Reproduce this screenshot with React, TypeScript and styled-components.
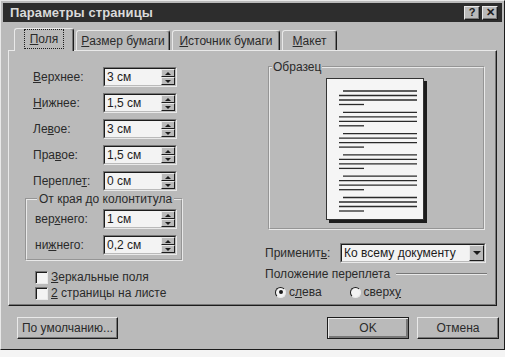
import React from 'react';
import styled, { createGlobalStyle } from 'styled-components';

const face = '#bababa';
const light = '#e9e9e9';
const shadow = '#777777';
const dark = '#1c1c1c';
const ink = '#2a2a2a';

const GlobalStyle = createGlobalStyle`
  html, body {
    margin: 0;
    padding: 0;
    background: #f4f4f4;
  }
  body {
    font-family: 'Liberation Sans', Arial, sans-serif;
    font-size: 12px;
    color: ${ink};
  }
  * {
    box-sizing: border-box;
  }
`;

const Window = styled.div`
  width: 505px;
  height: 350px;
  background: ${face};
  border: 1px solid;
  border-color: ${light} ${dark} ${dark} ${light};
  padding: 2px;
  display: flex;
  flex-direction: column;
`;

const TitleBar = styled.div`
  height: 19px;
  background: #2d2d2d;
  display: flex;
  align-items: center;
  justify-content: space-between;
  padding: 0 4px 0 7px;
`;

const Title = styled.span`
  color: #dadada;
  font-weight: bold;
  font-size: 13px;
  letter-spacing: 0.1px;
`;

const CaptionButtons = styled.div`
  display: flex;
  gap: 2px;
`;

const CaptionBtn = styled.div`
  width: 16px;
  height: 14px;
  background: ${face};
  border: 1px solid;
  border-color: ${light} ${dark} ${dark} ${light};
  box-shadow: inset -1px -1px ${shadow};
  display: flex;
  align-items: center;
  justify-content: center;
  font-weight: bold;
  font-size: 11px;
  line-height: 1;
  color: ${dark};
`;

const TabStrip = styled.div`
  display: flex;
  align-items: flex-end;
  gap: 2px;
  margin-top: 6px;
  padding-left: 11px;
  position: relative;
  z-index: 1;
`;

const Tab = styled.div<{ $w: number; $active?: boolean }>`
  width: ${(p) => p.$w}px;
  height: ${(p) => (p.$active ? 23 : 20)}px;
  margin-bottom: ${(p) => (p.$active ? -1 : 0)}px;
  background: ${face};
  border-top: 1px solid ${light};
  border-left: 1px solid ${light};
  border-right: 1px solid ${dark};
  box-shadow: inset -1px 0 ${shadow};
  border-radius: 3px 3px 0 0;
  display: flex;
  align-items: center;
  justify-content: center;
  padding-bottom: ${(p) => (p.$active ? 2 : 0)}px;
  white-space: nowrap;
`;

const Focus = styled.span`
  outline: 1px dotted ${dark};
  outline-offset: 2px;
  padding: 0 3px;
`;

const U = styled.span`
  text-decoration: underline;
`;

const Panel = styled.div`
  margin: 0 5px;
  height: 256px;
  border: 1px solid;
  border-color: ${light} ${dark} ${dark} ${light};
  box-shadow: inset -1px -1px ${shadow};
  display: grid;
  grid-template-columns: 250px 1fr;
`;

const LeftCol = styled.div`
  padding: 16px 0 0 24px;
`;

const Field = styled.div<{ $label: number }>`
  display: flex;
  align-items: center;
  height: 20px;
  margin-bottom: 6px;
  &:last-child {
    margin-bottom: 0;
  }
  & > span:first-child {
    width: ${(p) => p.$label}px;
  }
`;

const Sunken = styled.div<{ $w: number }>`
  width: ${(p) => p.$w}px;
  height: 20px;
  border: 1px solid;
  border-color: ${shadow} ${light} ${light} ${shadow};
  display: flex;
`;

const SunkenInner = styled.div`
  flex: 1;
  display: flex;
  border: 1px solid;
  border-color: ${dark} ${face} ${face} ${dark};
  background: #f3f3f3;
`;

const Value = styled.span`
  flex: 1;
  padding-left: 2px;
  line-height: 16px;
  color: ${dark};
`;

const SpinButtons = styled.div`
  width: 14px;
  display: flex;
  flex-direction: column;
`;

const ArrowBtn = styled.div<{ $down?: boolean }>`
  flex: 1;
  background: ${face};
  border: 1px solid;
  border-color: ${light} ${dark} ${dark} ${light};
  display: flex;
  align-items: center;
  justify-content: center;
  &::after {
    content: '';
    border-left: 3px solid transparent;
    border-right: 3px solid transparent;
    ${(p) =>
      p.$down
        ? `border-top: 3px solid ${dark};`
        : `border-bottom: 3px solid ${dark};`}
  }
`;

const DropBtn = styled(ArrowBtn)`
  width: 15px;
  flex: none;
  &::after {
    border-left-width: 4px;
    border-right-width: 4px;
    border-top-width: 4px;
  }
`;

const Group = styled.fieldset`
  margin: -5px 0 0 -8px;
  width: 158px;
  min-inline-size: 0;
  padding: 3px 0 4px 8px;
  border: 2px groove ${light};
`;

const Legend = styled.legend`
  padding: 0 2px;
  margin-left: 2px;
  line-height: 14px;
`;

const CheckList = styled.div`
  margin: 8px 0 0 2px;
`;

const CheckRow = styled.div`
  display: flex;
  align-items: center;
  height: 16px;
  gap: 3px;
`;

const CheckBox = styled.span`
  width: 13px;
  height: 13px;
  background: #f3f3f3;
  border: 1px solid;
  border-color: ${shadow} ${light} ${light} ${shadow};
  box-shadow: inset 1px 1px ${dark};
`;

const RightCol = styled.div`
  padding: 9px 0 0 6px;
`;

const Sample = styled.fieldset`
  margin: 0 11px 0 3px;
  min-inline-size: 0;
  padding: 4px 0 5px;
  border: 2px groove ${light};
`;

const SampleLegend = styled.legend`
  padding: 0 1px;
  margin-left: 2px;
  line-height: 14px;
`;

const Page = styled.svg`
  display: block;
  margin: 0 auto;
`;

const ApplyRow = styled.div`
  display: flex;
  align-items: center;
  height: 20px;
  margin-top: 13px;
  & > span:first-child {
    width: 75px;
  }
`;

const GutterHead = styled.div`
  display: flex;
  align-items: center;
  height: 14px;
  margin: 4px 9px 0 0;
`;

const Rule = styled.div`
  flex: 1;
  margin-left: 6px;
  border-top: 1px solid ${shadow};
  border-bottom: 1px solid ${light};
`;

const RadioRow = styled.div`
  display: flex;
  align-items: center;
  gap: 28px;
  height: 14px;
  margin-top: 4px;
  padding-left: 10px;
`;

const RadioItem = styled.label`
  display: flex;
  align-items: center;
  gap: 3px;
`;

const Radio = styled.span<{ $on?: boolean }>`
  width: 11px;
  height: 11px;
  border-radius: 50%;
  background: #f3f3f3;
  border: 1px solid;
  border-color: ${dark} ${light} ${light} ${dark};
  display: flex;
  align-items: center;
  justify-content: center;
  &::after {
    content: '';
    width: 4px;
    height: 4px;
    border-radius: 50%;
    background: ${(p) => (p.$on ? dark : 'transparent')};
  }
`;

const Footer = styled.div`
  display: flex;
  align-items: center;
  gap: 8px;
  margin-top: 11px;
  padding: 0 3px 0 14px;
`;

const Button = styled.div<{ $w: number; $default?: boolean; $push?: boolean }>`
  width: ${(p) => p.$w}px;
  height: 22px;
  margin-left: ${(p) => (p.$push ? 'auto' : '0')};
  background: ${face};
  border: 1px solid;
  border-color: ${(p) => (p.$default ? dark : `${light} ${dark} ${dark} ${light}`)};
  box-shadow: ${(p) =>
    p.$default
      ? `inset 1px 1px ${light}, inset -2px -2px ${shadow}`
      : `inset -1px -1px ${shadow}`};
  display: flex;
  align-items: center;
  justify-content: center;
  white-space: nowrap;
`;

type SpinProps = { value: string };

const Spin: React.FC<SpinProps> = ({ value }) => (
  <Sunken $w={74}>
    <SunkenInner>
      <Value>{value}</Value>
      <SpinButtons>
        <ArrowBtn />
        <ArrowBtn $down />
      </SpinButtons>
    </SunkenInner>
  </Sunken>
);

const PagePreview: React.FC = () => {
  const paragraphs = [0, 1, 2, 3, 4, 5];
  return (
    <Page width={101} height={145} viewBox="0 0 101 145">
      <rect x={3} y={3} width={98} height={142} fill="#1c1c1c" />
      <rect x={0.5} y={0.5} width={97} height={141} fill="#f5f5f5" stroke="#333" />
      {paragraphs.map((i) => {
        const y = 13 + i * 21.3;
        return (
          <g key={i} stroke="#2a2a2a" strokeWidth={1.3}>
            <line x1={17} y1={y} x2={91} y2={y} />
            <line x1={13} y1={y + 4.5} x2={91} y2={y + 4.5} />
            <line x1={13} y1={y + 9} x2={91} y2={y + 9} />
            <line x1={13} y1={y + 13.5} x2={38} y2={y + 13.5} />
          </g>
        );
      })}
    </Page>
  );
};

const margins = [
  { label: <><U>В</U>ерхнее:</>, value: '3 см' },
  { label: <><U>Н</U>ижнее:</>, value: '1,5 см' },
  { label: <>Ле<U>в</U>ое:</>, value: '3 см' },
  { label: <>Пра<U>в</U>ое:</>, value: '1,5 см' },
  { label: <>Перепле<U>т</U>:</>, value: '0 см' },
];

const App: React.FC = () => (
  <>
    <GlobalStyle />
    <Window>
      <TitleBar>
        <Title>Параметры страницы</Title>
        <CaptionButtons>
          <CaptionBtn>?</CaptionBtn>
          <CaptionBtn>✕</CaptionBtn>
        </CaptionButtons>
      </TitleBar>

      <TabStrip>
        <Tab $w={60} $active>
          <Focus>
            <U>П</U>оля
          </Focus>
        </Tab>
        <Tab $w={94}>
          <U>Р</U>азмер бумаги
        </Tab>
        <Tab $w={108}>
          <U>И</U>сточник бумаги
        </Tab>
        <Tab $w={55}>
          <U>М</U>акет
        </Tab>
      </TabStrip>

      <Panel>
        <LeftCol>
          {margins.map((m, i) => (
            <Field key={i} $label={70}>
              <span>{m.label}</span>
              <Spin value={m.value} />
            </Field>
          ))}
          <Group>
            <Legend>От края до колонтитула</Legend>
            <Field $label={68}>
              <span>
                вер<U>х</U>него:
              </span>
              <Spin value="1 см" />
            </Field>
            <Field $label={68}>
              <span>
                ни<U>ж</U>него:
              </span>
              <Spin value="0,2 см" />
            </Field>
          </Group>
          <CheckList>
            <CheckRow>
              <CheckBox />
              <span>
                <U>З</U>еркальные поля
              </span>
            </CheckRow>
            <CheckRow>
              <CheckBox />
              <span>
                <U>2</U> страницы на листе
              </span>
            </CheckRow>
          </CheckList>
        </LeftCol>

        <RightCol>
          <Sample>
            <SampleLegend>Образец</SampleLegend>
            <PagePreview />
          </Sample>
          <ApplyRow>
            <span>
              Применит<U>ь</U>:
            </span>
            <Sunken $w={146}>
              <SunkenInner>
                <Value>Ко всему документу</Value>
                <DropBtn $down />
              </SunkenInner>
            </Sunken>
          </ApplyRow>
          <GutterHead>
            <span>Положение переплета</span>
            <Rule />
          </GutterHead>
          <RadioRow>
            <RadioItem>
              <Radio $on />
              <span>
                с<U>л</U>ева
              </span>
            </RadioItem>
            <RadioItem>
              <Radio />
              <span>
                сверх<U>у</U>
              </span>
            </RadioItem>
          </RadioRow>
        </RightCol>
      </Panel>

      <Footer>
        <Button $w={101}>По умолчанию...</Button>
        <Button $w={82} $default $push>
          OK
        </Button>
        <Button $w={82}>Отмена</Button>
      </Footer>
    </Window>
  </>
);

export default App;
